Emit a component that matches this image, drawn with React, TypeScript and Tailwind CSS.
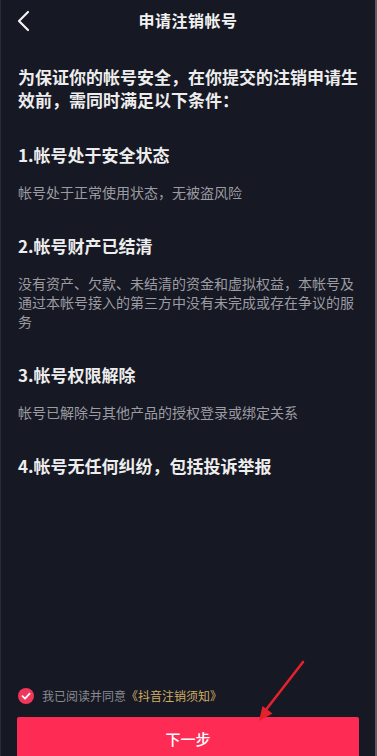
import React from "react";

const FONT = {
  fontFamily: '"Noto Sans CJK SC", "Noto Sans", sans-serif',
};

type Rule = {
  title: string;
  body?: string;
};

const RULES: Rule[] = [
  { title: "1.帐号处于安全状态", body: "帐号处于正常使用状态，无被盗风险" },
  {
    title: "2.帐号财产已结清",
    body: "没有资产、欠款、未结清的资金和虚拟权益，本帐号及通过本帐号接入的第三方中没有未完成或存在争议的服务",
  },
  { title: "3.帐号权限解除", body: "帐号已解除与其他产品的授权登录或绑定关系" },
  { title: "4.帐号无任何纠纷，包括投诉举报" },
];

export default function App() {
  return (
    <div
      style={FONT}
      className="relative flex h-[756px] w-[377px] flex-col overflow-hidden border-l border-r-2 border-l-[#2a2b33] border-r-[#5c5d63] bg-[#161823] text-white"
    >
      {/* header */}
      <header className="relative flex h-[40px] shrink-0 items-center justify-center">
        <svg
          className="absolute left-[14px] top-[10px] h-[22px] w-[16px]"
          viewBox="0 0 16 22"
          fill="none"
        >
          <polyline
            points="13,2 4,11 13,20"
            stroke="#f2f2f2"
            strokeWidth="2.2"
            strokeLinecap="round"
            strokeLinejoin="round"
          />
        </svg>
        <h1 className="text-[16px] font-bold tracking-[0.5px] text-[#f2f2f2]">
          申请注销帐号
        </h1>
      </header>

      {/* content */}
      <main className="flex-1 px-[17px] pt-[25px]">
        <p className="text-[17px] font-bold leading-[23px] text-[#ededed]">
          为保证你的帐号安全，在你提交的注销申请生效前，需同时满足以下条件：
        </p>

        {RULES.map((rule) => (
          <section key={rule.title} className="mt-[32px]">
            <h2 className="text-[17px] font-bold leading-[24px] text-[#ededed]">
              {rule.title}
            </h2>
            {rule.body && (
              <p className="mt-[16px] text-[14px] leading-[19px] text-[#9c9ca2]">
                {rule.body}
              </p>
            )}
          </section>
        ))}
      </main>

      {/* footer */}
      <footer className="-mb-[5px] shrink-0 px-[16px]">
        <div className="flex items-center gap-[8px] pl-[1px]">
          <span className="flex h-[16px] w-[16px] items-center justify-center rounded-full bg-[#f0375b]">
            <svg viewBox="0 0 16 16" className="h-[16px] w-[16px]" fill="none">
              <polyline
                points="4.5,8.2 7,10.6 11.6,5.6"
                stroke="#fff"
                strokeWidth="1.8"
                strokeLinecap="round"
                strokeLinejoin="round"
              />
            </svg>
          </span>
          <p className="text-[12px] leading-[16px] text-[#8a8b91]">
            我已阅读并同意
            <span className="text-[#cfae64]">《抖音注销须知》</span>
          </p>
        </div>
        <button className="mt-[13px] flex h-[44px] w-full items-center justify-center rounded-[2px] bg-[#fe2c55] text-[15px] font-medium text-white">
          下一步
        </button>
      </footer>

      {/* annotation arrow */}
      <svg
        className="pointer-events-none absolute left-0 top-0 h-[756px] w-[377px]"
        viewBox="0 0 377 756"
        fill="none"
      >
        <line
          x1="302"
          y1="662"
          x2="264"
          y2="711"
          stroke="#e3222b"
          strokeWidth="2.6"
          strokeLinecap="round"
        />
        <polygon points="258,721 271.5,713.4 261.5,706" fill="#e3222b" />
      </svg>
    </div>
  );
}
